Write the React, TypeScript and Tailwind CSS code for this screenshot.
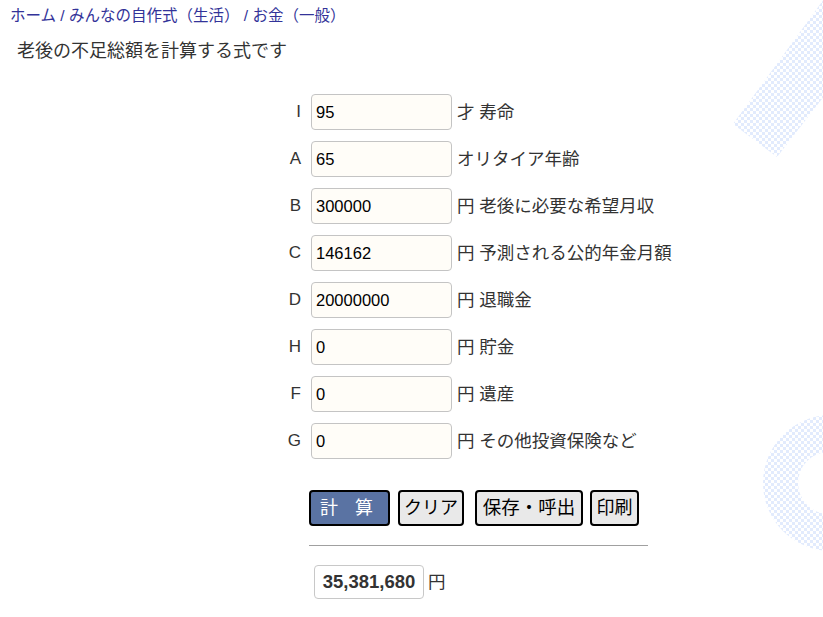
import React from 'react';

const rows = [
  { key: 'I', value: '95', unit: '才 寿命' },
  { key: 'A', value: '65', unit: 'オリタイア年齢' },
  { key: 'B', value: '300000', unit: '円 老後に必要な希望月収' },
  { key: 'C', value: '146162', unit: '円 予測される公的年金月額' },
  { key: 'D', value: '20000000', unit: '円 退職金' },
  { key: 'H', value: '0', unit: '円 貯金' },
  { key: 'F', value: '0', unit: '円 遺産' },
  { key: 'G', value: '0', unit: '円 その他投資保険など' },
];

const font = { fontFamily: '"Liberation Sans", "Noto Sans CJK JP", sans-serif' };

function Decoration() {
  return (
    <svg className="absolute inset-0 pointer-events-none" width="823" height="617">
      <defs>
        <pattern id="dots" width="6" height="6" patternUnits="userSpaceOnUse">
          <rect x="0" y="0" width="3" height="3" fill="#e2ebfd" />
          <rect x="3" y="3" width="3" height="3" fill="#e2ebfd" />
        </pattern>
        <filter id="soft">
          <feGaussianBlur stdDeviation="0.6" />
        </filter>
      </defs>
      <g filter="url(#soft)">
        <polygon points="832,-12 733,124 777,157 860,50" fill="url(#dots)" />
        <path
          fillRule="evenodd"
          d="M763 483 a68 68 0 1 0 136 0 a68 68 0 1 0 -136 0 Z M798 483 a31 31 0 1 0 62 0 a31 31 0 1 0 -62 0 Z"
          fill="url(#dots)"
        />
      </g>
    </svg>
  );
}

export default function App(): React.ReactElement {
  return (
    <div className="relative w-[823px] h-[617px] bg-white overflow-hidden text-[#333]" style={font}>
      <Decoration />
      <div className="relative">
        <nav className="pl-[10px] pt-[5px] text-[15.5px] leading-[22px] text-[#333399]">
          <span>ホーム</span> / <span>みんなの自作式（生活）</span> / <span>お金（一般）</span>
        </nav>
        <p className="pl-[17px] mt-[12px] text-[18px] leading-[24px]">老後の不足総額を計算する式です</p>

        <div className="mt-[31px] pl-[279px] flex flex-col gap-[11px]">
          {rows.map((r) => (
            <div key={r.key} className="flex items-center h-[36px]">
              <span className="w-[22px] text-right text-[17px]">{r.key}</span>
              <input
                readOnly
                value={r.value}
                className="ml-[10px] w-[141px] h-[36px] px-[4px] bg-[#fffdf8] border border-[#c4c4c4] rounded-[4px] text-[16.5px] text-black outline-none"
                style={font}
              />
              <span className="ml-[5px] text-[17.5px]">{r.unit}</span>
            </div>
          ))}
        </div>

        <div className="mt-[31px] pl-[309px] flex items-center">
          <button className="h-[36px] w-[81px] bg-[#5a73a3] text-white border-2 border-black rounded-[4px] text-[18px] tracking-[6px]">
            計 算
          </button>
          <button className="ml-[8px] h-[36px] w-[66px] bg-[#e9e9e9] border-2 border-black rounded-[4px] text-[18px] text-black">
            クリア
          </button>
          <button className="ml-[11px] h-[36px] w-[108px] bg-[#e9e9e9] border-2 border-black rounded-[4px] text-[18.5px] text-black">
            保存・呼出
          </button>
          <button className="ml-[7px] h-[36px] w-[49px] bg-[#e9e9e9] border-2 border-black rounded-[4px] text-[18px] text-black">
            印刷
          </button>
        </div>

        <div className="mt-[19px] ml-[309px] w-[339px] h-0 border-t border-[#a0a0a0]" />

        <div className="mt-[19px] pl-[314px] flex items-center">
          <div className="h-[34px] w-[110px] flex items-center justify-center border border-[#c8c8c8] rounded-[4px] bg-white text-[18.5px] font-bold">
            35,381,680
          </div>
          <span className="ml-[4px] text-[17.5px]">円</span>
        </div>
      </div>
    </div>
  );
}
